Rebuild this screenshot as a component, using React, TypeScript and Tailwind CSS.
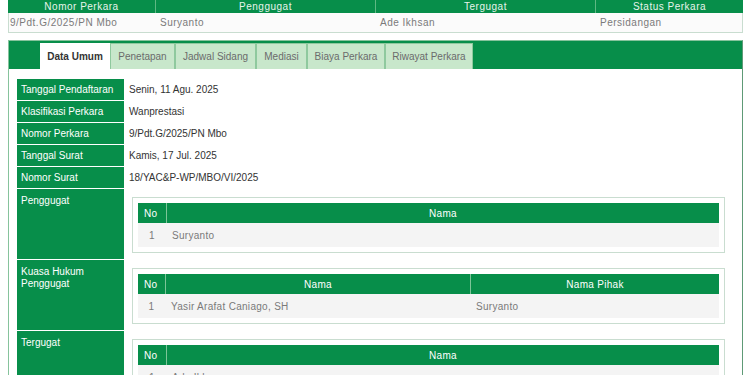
const green = 'bg-[#078e4a]';

const summary = [
    { label: 'Nomor Perkara', value: '9/Pdt.G/2025/PN Mbo' },
    { label: 'Penggugat', value: 'Suryanto' },
    { label: 'Tergugat', value: 'Ade Ikhsan' },
    { label: 'Status Perkara', value: 'Persidangan' },
];

const tabs = [
    { name: 'Data Umum', w: 'w-[70px]' },
    { name: 'Penetapan', w: 'w-[65px]' },
    { name: 'Jadwal Sidang', w: 'w-[81px]' },
    { name: 'Mediasi', w: 'w-[51px]' },
    { name: 'Biaya Perkara', w: 'w-[78px]' },
    { name: 'Riwayat Perkara', w: 'w-[88px]' },
];

const info = [
    { label: 'Tanggal Pendaftaran', value: 'Senin, 11 Agu. 2025' },
    { label: 'Klasifikasi Perkara', value: 'Wanprestasi' },
    { label: 'Nomor Perkara', value: '9/Pdt.G/2025/PN Mbo' },
    { label: 'Tanggal Surat', value: 'Kamis, 17 Jul. 2025' },
    { label: 'Nomor Surat', value: '18/YAC&P-WP/MBO/VI/2025' },
];

const Label = ({ children, tall }: { children: React.ReactNode; tall?: boolean }) => (
    <div className={`${green} text-white px-1 ${tall ? 'pt-[6px]' : 'flex items-center'} leading-[12px]`}>
        {children}
    </div>
);

const PartyBox = ({ cols, rows }: { cols: string[]; rows: string[][] }) => {
    const grid = cols.length === 3 ? 'grid-cols-[27px_305px_1fr]' : 'grid-cols-[28px_1fr]';
    return (
        <div className="border border-[#c9ddd0] p-[5px]">
            <div className={`grid ${grid} ${green} text-white h-[20px] tracking-[0.3px]`}>
                {cols.map((c, i) => (
                    <div
                        key={c}
                        className={`flex items-center ${i === 0 ? 'pl-[6px]' : 'justify-center'} ${i > 0 ? 'border-l border-[#7cc598]' : ''}`}
                    >
                        {c}
                    </div>
                ))}
            </div>
            {rows.map((r, ri) => (
                <div key={ri} className={`grid ${grid} bg-[#f4f4f4] h-[24px] text-[#7a7a7a] tracking-[0.3px]`}>
                    {r.map((v, i) => (
                        <div key={i} className={`flex items-center ${i === 0 ? 'justify-center' : 'pl-[6px]'}`}>
                            {v}
                        </div>
                    ))}
                </div>
            ))}
        </div>
    );
};

export default function App() {
    return (
        <div className="w-[750px] h-[375px] overflow-hidden bg-white font-['Liberation_Sans',Arial,sans-serif] text-[10px] text-[#333]">
            {/* ringkasan perkara */}
            <div className="ml-2 w-[735px]">
                <div className={`grid grid-cols-[147px_220px_220px_148px] ${green} h-[13px] text-[#e6f4ea] tracking-[0.5px]`}>
                    {summary.map((s, i) => (
                        <div key={s.label} className={`flex items-center justify-center leading-none ${i > 0 ? 'border-l border-[#5fb883]' : ''}`}>
                            {s.label}
                        </div>
                    ))}
                </div>
                <div className="grid grid-cols-[147px_220px_220px_148px] h-[20px] border border-t-0 border-[#c9ddd0] bg-[#fbfbfb] text-[#7a7a7a] tracking-[0.5px]">
                    {summary.map((s, i) => (
                        <div key={s.label} className={`flex items-center ${i === 0 ? 'pl-[1px]' : 'pl-1'}`}>
                            {s.value}
                        </div>
                    ))}
                </div>
            </div>

            {/* panel detail */}
            <div className="ml-2 mt-[7px] w-[735px] border border-[#86c39c] border-r-[#5e9a76] h-[400px]">
                <div className={`${green} h-[28px] pl-[31px] pt-[2px] flex items-end`}>
                    {tabs.map((t, i) => (
                        <div
                            key={t.name}
                            className={`${t.w} h-[26px] flex items-center justify-center ${
                                i === 0
                                    ? 'bg-white font-bold text-[#333]'
                                    : 'bg-[#c8e7cb] text-[#6b6b6b] border border-b-0 border-[#8fc99e]'
                            }`}
                        >
                            {t.name}
                        </div>
                    ))}
                </div>

                <div className="pt-[10px] pl-2 pr-2 grid grid-cols-[107px_1fr] gap-y-px">
                    {info.map((r) => (
                        <div key={r.label} className="contents">
                            <div className="h-[21px]">
                                <Label>
                                    <span className="h-[21px] flex items-center">{r.label}</span>
                                </Label>
                            </div>
                            <div className="h-[21px] flex items-center pl-[5px]">{r.value}</div>
                        </div>
                    ))}

                    <Label tall>Penggugat</Label>
                    <div className="pl-2 pr-[9px] pt-[8px] pb-[6px]">
                        <PartyBox cols={['No', 'Nama']} rows={[['1', 'Suryanto']]} />
                    </div>

                    <Label tall>
                        Kuasa Hukum
                        <br />
                        Penggugat
                    </Label>
                    <div className="pl-2 pr-[9px] pt-[8px] pb-[6px]">
                        <PartyBox cols={['No', 'Nama', 'Nama Pihak']} rows={[['1', 'Yasir Arafat Caniago, SH', 'Suryanto']]} />
                    </div>

                    <Label tall>Tergugat</Label>
                    <div className="pl-2 pr-[9px] pt-[8px] pb-[6px]">
                        <PartyBox cols={['No', 'Nama']} rows={[['1', 'Ade Ikhsan']]} />
                    </div>
                </div>
            </div>
        </div>
    );
}
